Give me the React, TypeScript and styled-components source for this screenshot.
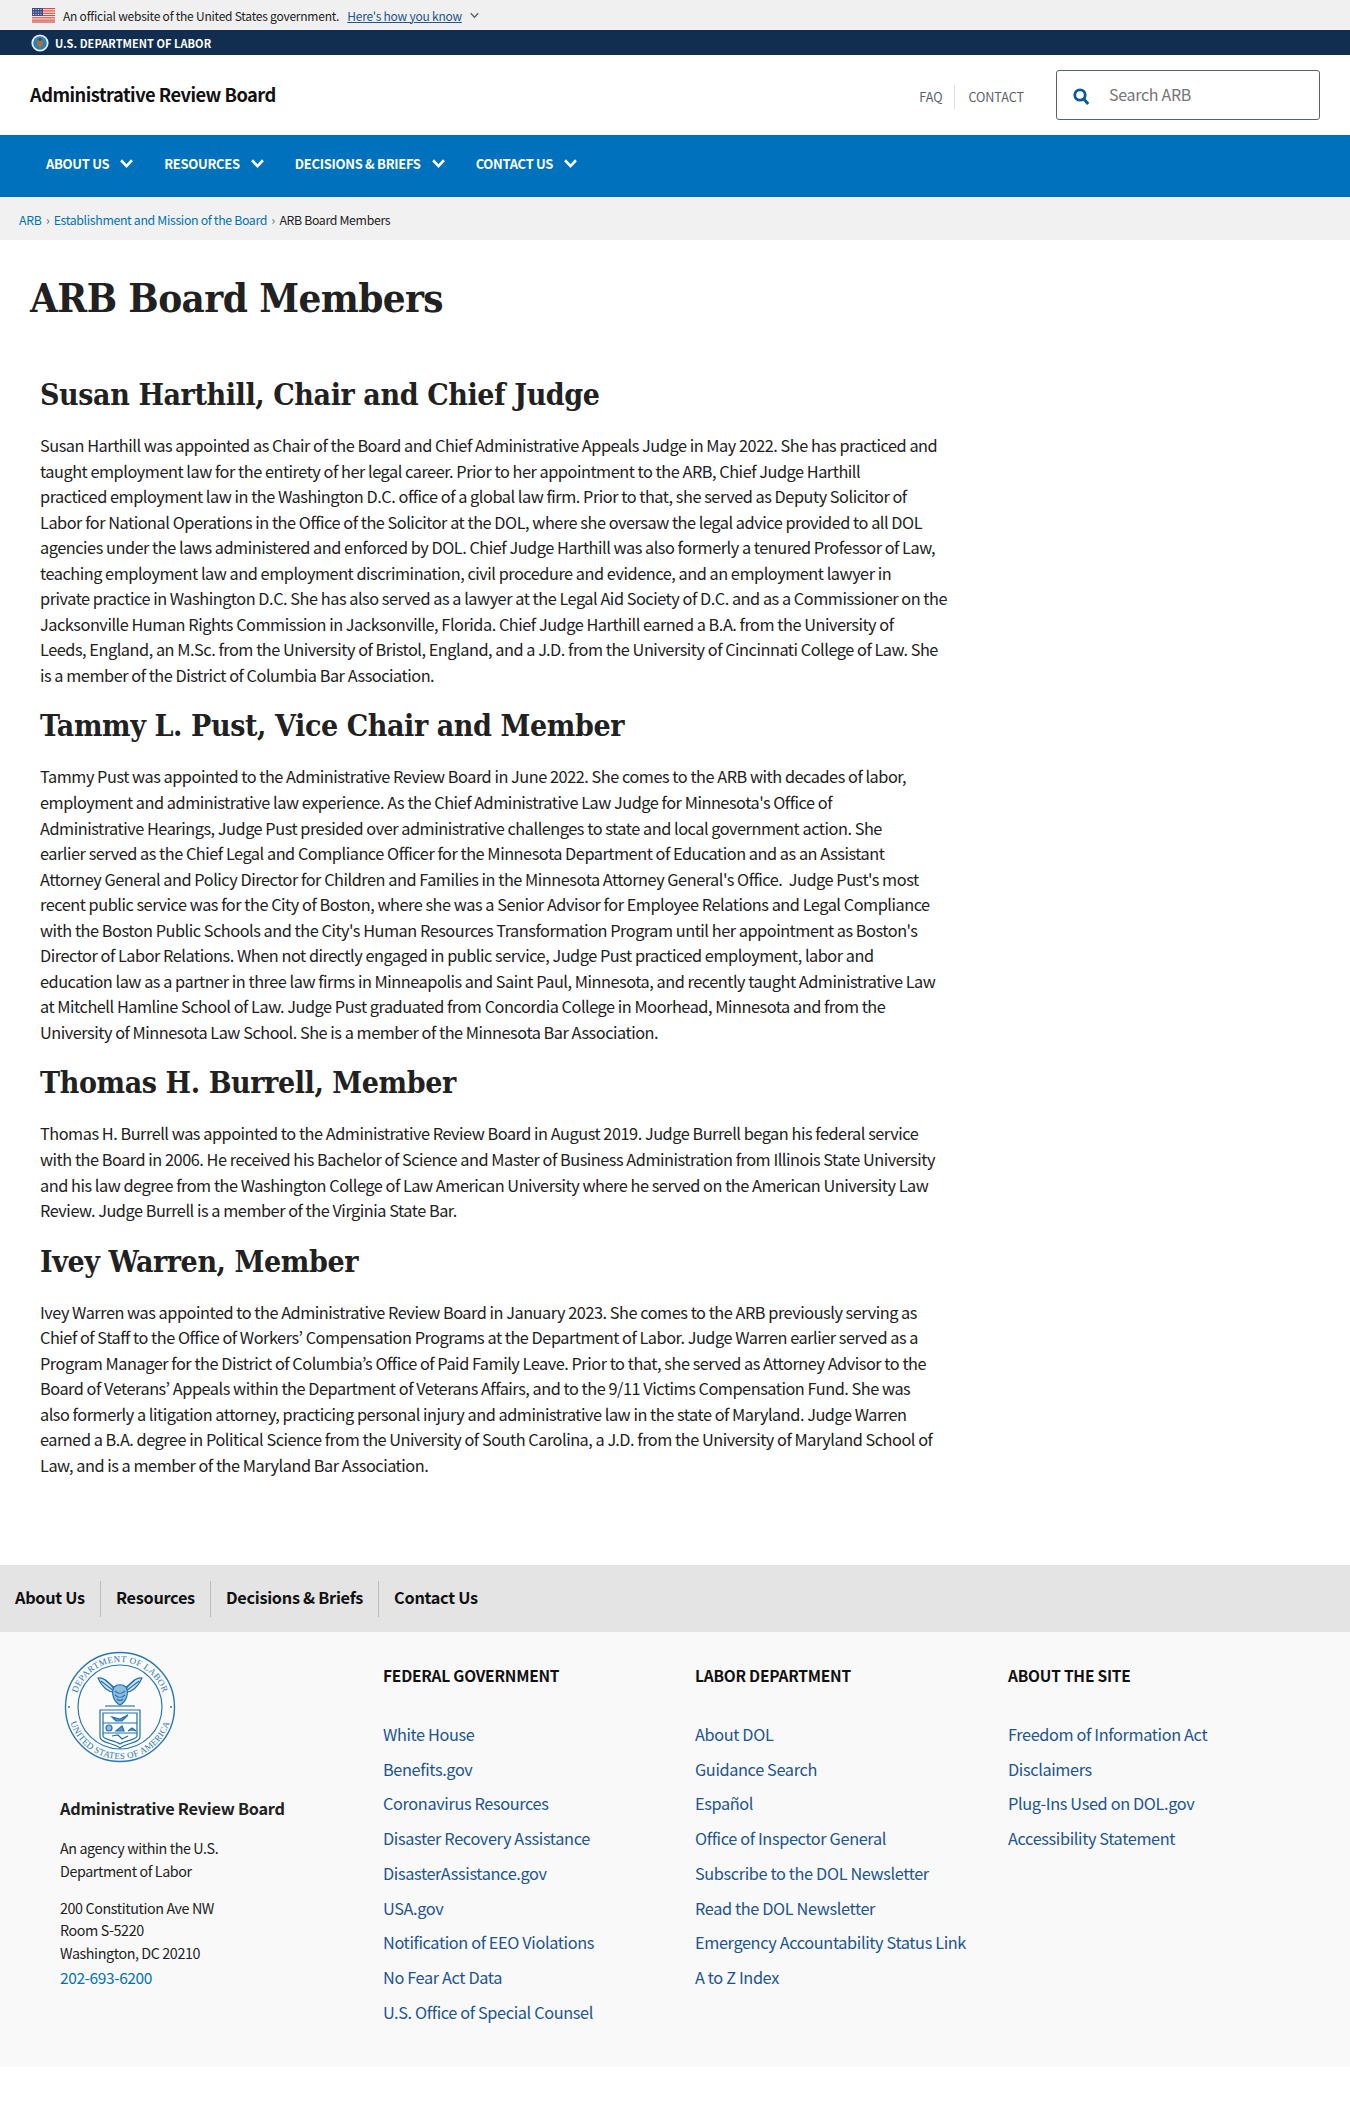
import React from "react";
import styled, { createGlobalStyle } from "styled-components";

const SANS = `"Noto Sans CJK KR", "Noto Sans", sans-serif`;
const SERIF = `"DejaVu Serif Condensed", "DejaVu Serif", "Liberation Serif", serif`;

const Global = createGlobalStyle`
  html, body { margin: 0; padding: 0; background: #fff; }
  body { font-family: ${SANS}; color: #212121; }
  * { box-sizing: border-box; }
  a { text-decoration: none; }
`;

const Page = styled.div`width: 1350px; min-height: 2126px; display: flex; flex-direction: column;`;

const GovBanner = styled.div`
  height: 30px; background: #f0f0f0; display: flex; align-items: center; padding-left: 32px; gap: 8px;
  font-size: 12px; letter-spacing: -0.23px; color: #212121;
`;
const GovLink = styled.a`color: #205493; text-decoration: underline;`;
const DolBar = styled.div`
  height: 25px; background: #112e51; display: flex; align-items: center; padding-left: 31px; gap: 6px;
  color: #fff; font-size: 11px; font-weight: 700; letter-spacing: 0.05px;
`;
const Header = styled.header`
  height: 80px; background: #fff; display: flex; align-items: center; padding: 0 30px;
`;
const SiteTitle = styled.div`font-size: 18.3px; font-weight: 700; letter-spacing: -0.52px; color: #111; flex: 1; padding-bottom: 2px;`;
const TopLinks = styled.div`display: flex; align-items: center; margin-right: 32px; margin-top: 4px;`;
const TopLink = styled.a<{ $divider?: boolean }>`
  font-size: 12.6px; letter-spacing: -0.05px; color: #5b616b; height: 24px; line-height: 24px;
  ${(p) => (p.$divider ? "border-right: 1px solid #dcdee0; padding-right: 12px; margin-right: 13px;" : "")}
`;
const SearchBox = styled.div`
  width: 264px; height: 50px; border: 1px solid #5b616b; border-radius: 3px; display: flex; align-items: center;
  padding: 0 0 2px 16px; gap: 19px; font-size: 16px; letter-spacing: -0.3px; color: #757575;
`;
const Nav = styled.nav`
  height: 62px; background: #0071bc; display: flex; align-items: center; padding-left: 46px; gap: 31px;
`;
const NavItem = styled.a`
  display: flex; align-items: center; gap: 11px; color: #fff; font-size: 13px; font-weight: 700;
  text-transform: uppercase; letter-spacing: -0.3px; padding-bottom: 5px;
`;
const Crumbs = styled.div`
  height: 43px; background: #f1f1f1; display: flex; align-items: center; padding: 2px 0 0 19px; font-size: 12.3px; letter-spacing: -0.33px; color: #212121;
`;
const CrumbLink = styled.a`color: #0071bc;`;
const CrumbSep = styled.span`color: #5b616b; margin: 0 4.5px; font-size: 12px;`;
const Main = styled.main`padding: 29px 30px 0; height: 1325px;`;
const Title = styled.h1`
  font-family: ${SERIF}; font-weight: 700; font-size: 40px; line-height: 58px; margin: 0 0 46px; color: #212121; letter-spacing: -0.6px;
`;
const Bio = styled.section`padding-left: 10px; margin-bottom: 16px;`;
const BioName = styled.h2`
  font-family: ${SERIF}; font-weight: 700; font-size: 30px; line-height: 44px; margin: 0 0 16px; color: #212121; letter-spacing: -0.4px;
`;
const BioText = styled.p`
  margin: 0; font-size: 16.3px; letter-spacing: -0.46px; line-height: 25.55px; white-space: pre-line; color: #212121;
`;
const FooterNav = styled.div`
  height: 67px; background: #e4e4e4; display: flex; align-items: center; padding-left: 15px;
`;
const FooterNavLink = styled.a<{ $last?: boolean }>`
  font-size: 16.3px; letter-spacing: -0.28px; font-weight: 700; color: #111; height: 36px; line-height: 32px;
  ${(p) => (p.$last ? "" : "border-right: 1px solid #bdbdbd; padding-right: 15px; margin-right: 15px;")}
`;
const Footer = styled.footer`
  height: 435px; background: #f9f9f9; display: grid; grid-template-columns: 323px 312px 313px 1fr; padding-left: 60px;
`;
const AgencyCol = styled.div`padding-top: 19px; font-size: 14.3px; letter-spacing: -0.4px; line-height: 22.8px; color: #212121;`;
const SealWrap = styled.div`width: 116px; height: 110px; margin-left: 2px; margin-bottom: 34px;`;
const AgencyName = styled.div`font-size: 16.3px; font-weight: 700; line-height: 26px; margin-bottom: 16px; letter-spacing: -0.25px;`;
const AgencyPara = styled.div`margin-bottom: 14px; white-space: pre-line;`;
const AddressBlock = styled.div`white-space: pre-line;`;
const Phone = styled.a`color: #0071bc; font-size: 15.5px; display: block; line-height: 24px;`;
const LinkCol = styled.div`padding-top: 30px; display: flex; flex-direction: column;`;
const ColHead = styled.div`
  font-size: 15.5px; letter-spacing: -0.22px; font-weight: 700; text-transform: uppercase; color: #111; line-height: 26px; margin-bottom: 29px;
`;
const ColLink = styled.a`font-size: 16.3px; letter-spacing: -0.36px; color: #205493; line-height: 34.7px; white-space: nowrap;`;

const Flag = () => (
  <svg width="23" height="15" viewBox="0 0 23 15">
    <rect width="23" height="15" fill="#fff" />
    {[0, 2.3, 4.6, 6.9, 9.2, 11.5, 13.4].map((y) => (
      <rect key={y} x="0" y={y} width="23" height="1.25" fill="#d5493f" />
    ))}
    <rect width="11" height="8" fill="#3c4a8a" />
    {[1.5, 4, 6.5].map((y) => [1.5, 4, 6.5, 9].map((x) => <circle key={x + "-" + y} cx={x} cy={y} r="0.6" fill="#fff" />))}
  </svg>
);
const Chevron = ({ color = "#fff", size = 13, w = 2.4 }: { color?: string; size?: number; w?: number }) => (
  <svg width={size} height={size} viewBox="0 0 12 12" fill="none">
    <path d="M1 3 L6 8.4 L11 3" stroke={color} strokeWidth={w} />
  </svg>
);
const SearchIcon = () => (
  <svg width="17" height="18" viewBox="0 0 17 18" fill="none" style={{ marginTop: 6 }}>
    <circle cx="7" cy="7" r="5.2" stroke="#0a5a94" strokeWidth="2.8" />
    <path d="M10.8 11 L15.2 16" stroke="#0a5a94" strokeWidth="3" />
  </svg>
);
const MiniSeal = () => (
  <svg width="18" height="18" viewBox="0 0 18 18">
    <circle cx="9" cy="9" r="8.6" fill="#e6eef4" />
    <circle cx="9" cy="9" r="6.8" fill="#2f7fb5" />
    <path d="M6.5 6 H11.5 V11 L9 14 L6.5 11 Z" fill="#a9713a" />
    <circle cx="9" cy="5.5" r="1.6" fill="#3f4f3f" />
  </svg>
);
const Seal = () => (
  <svg width="116" height="112" viewBox="0 0 116 112" fill="none">
    <defs>
      <path id="sealTop" d="M 13 56 A 45 45 0 0 1 103 56" />
      <path id="sealBottom" d="M 6 56 A 52 52 0 0 0 110 56" />
    </defs>
    <circle cx="58" cy="56" r="54.5" stroke="#2a77b3" strokeWidth="1.4" fill="#fff" fillOpacity="0.4" />
    <circle cx="58" cy="56" r="42" stroke="#2a77b3" strokeWidth="1.2" />
    <text fontFamily="Liberation Serif, serif" fontSize="9" fill="#2a77b3" letterSpacing="0.4">
      <textPath href="#sealTop" startOffset="50%" textAnchor="middle">DEPARTMENT OF LABOR</textPath>
    </text>
    <text fontFamily="Liberation Serif, serif" fontSize="9" fill="#2a77b3" letterSpacing="0.3">
      <textPath href="#sealBottom" startOffset="50%" textAnchor="middle">UNITED STATES OF AMERICA</textPath>
    </text>
    <circle cx="7" cy="56" r="1" fill="#2a77b3" />
    <circle cx="109" cy="56" r="1" fill="#2a77b3" />
    <g stroke="#1f6fae" strokeWidth="1.1">
      <path d="M36 27 C42 26 50 33 53 41 C47 42 40 36 36 27 Z" fill="#cfe3f2" />
      <path d="M80 27 C74 26 66 33 63 41 C69 42 76 36 80 27 Z" fill="#cfe3f2" />
      <path d="M39 30 L52 40 M43 29 L54 38 M77 30 L64 40 M73 29 L62 38" />
      <path d="M52 36 C55 33 61 33 64 36 C67 42 65 50 58 54 C51 50 49 42 52 36 Z" fill="#8fbde0" />
      <path d="M53 40 C56 43 60 43 63 40 M53 44 C56 47 60 47 63 44 M55 48 C57 50 59 50 61 48" />
      <path d="M43 55 H73" />
    </g>
    <g stroke="#1f6fae" strokeWidth="1.2" fill="none">
      <path d="M38 59 H78 V86 C78 92 64 92 58 97 C52 92 38 92 38 86 Z" fill="#fff" />
      <path d="M41 62 H75 V85 C75 89 63 89 58 93 C53 89 41 89 41 85 Z" />
      <path d="M41 72 H75 M41 82 H75" />
      <path d="M50 66 L58 68 L66 64 L60 70 L54 70 Z" fill="#5d9bcb" />
      <circle cx="47" cy="77" r="3" fill="#8fbde0" />
      <path d="M54 80 L60 75 L62 80 Z M66 80 L70 77 L74 80" fill="#5d9bcb" />
      <path d="M50 85 L56 84 L60 88 L66 85" />
    </g>
  </svg>
);

const bios = [
  {
    name: "Susan Harthill, Chair and Chief Judge",
    text: `Susan Harthill was appointed as Chair of the Board and Chief Administrative Appeals Judge in May 2022. She has practiced and
taught employment law for the entirety of her legal career. Prior to her appointment to the ARB, Chief Judge Harthill
practiced employment law in the Washington D.C. office of a global law firm. Prior to that, she served as Deputy Solicitor of
Labor for National Operations in the Office of the Solicitor at the DOL, where she oversaw the legal advice provided to all DOL
agencies under the laws administered and enforced by DOL. Chief Judge Harthill was also formerly a tenured Professor of Law,
teaching employment law and employment discrimination, civil procedure and evidence, and an employment lawyer in
private practice in Washington D.C. She has also served as a lawyer at the Legal Aid Society of D.C. and as a Commissioner on the
Jacksonville Human Rights Commission in Jacksonville, Florida. Chief Judge Harthill earned a B.A. from the University of
Leeds, England, an M.Sc. from the University of Bristol, England, and a J.D. from the University of Cincinnati College of Law. She
is a member of the District of Columbia Bar Association.`,
  },
  {
    name: "Tammy L. Pust, Vice Chair and Member",
    text: `Tammy Pust was appointed to the Administrative Review Board in June 2022. She comes to the ARB with decades of labor,
employment and administrative law experience. As the Chief Administrative Law Judge for Minnesota's Office of
Administrative Hearings, Judge Pust presided over administrative challenges to state and local government action. She
earlier served as the Chief Legal and Compliance Officer for the Minnesota Department of Education and as an Assistant
Attorney General and Policy Director for Children and Families in the Minnesota Attorney General's Office.\u00a0 Judge Pust's most
recent public service was for the City of Boston, where she was a Senior Advisor for Employee Relations and Legal Compliance
with the Boston Public Schools and the City's Human Resources Transformation Program until her appointment as Boston's
Director of Labor Relations. When not directly engaged in public service, Judge Pust practiced employment, labor and
education law as a partner in three law firms in Minneapolis and Saint Paul, Minnesota, and recently taught Administrative Law
at Mitchell Hamline School of Law. Judge Pust graduated from Concordia College in Moorhead, Minnesota and from the
University of Minnesota Law School. She is a member of the Minnesota Bar Association.`,
  },
  {
    name: "Thomas H. Burrell, Member",
    text: `Thomas H. Burrell was appointed to the Administrative Review Board in August 2019. Judge Burrell began his federal service
with the Board in 2006. He received his Bachelor of Science and Master of Business Administration from Illinois State University
and his law degree from the Washington College of Law American University where he served on the American University Law
Review. Judge Burrell is a member of the Virginia State Bar.`,
  },
  {
    name: "Ivey Warren, Member",
    text: `Ivey Warren was appointed to the Administrative Review Board in January 2023. She comes to the ARB previously serving as
Chief of Staff to the Office of Workers’ Compensation Programs at the Department of Labor. Judge Warren earlier served as a
Program Manager for the District of Columbia’s Office of Paid Family Leave. Prior to that, she served as Attorney Advisor to the
Board of Veterans’ Appeals within the Department of Veterans Affairs, and to the 9/11 Victims Compensation Fund. She was
also formerly a litigation attorney, practicing personal injury and administrative law in the state of Maryland. Judge Warren
earned a B.A. degree in Political Science from the University of South Carolina, a J.D. from the University of Maryland School of
Law, and is a member of the Maryland Bar Association.`,
  },
];

const cols = [
  {
    head: "Federal Government",
    links: ["White House", "Benefits.gov", "Coronavirus Resources", "Disaster Recovery Assistance", "DisasterAssistance.gov", "USA.gov", "Notification of EEO Violations", "No Fear Act Data", "U.S. Office of Special Counsel"],
  },
  {
    head: "Labor Department",
    links: ["About DOL", "Guidance Search", "Español", "Office of Inspector General", "Subscribe to the DOL Newsletter", "Read the DOL Newsletter", "Emergency Accountability Status Link", "A to Z Index"],
  },
  {
    head: "About the Site",
    links: ["Freedom of Information Act", "Disclaimers", "Plug-Ins Used on DOL.gov", "Accessibility Statement"],
  },
];

const navItems = ["About Us", "Resources", "Decisions & Briefs", "Contact Us"];

export default function App() {
  return (
    <Page>
      <Global />
      <GovBanner>
        <Flag />
        <span>An official website of the United States government.</span>
        <GovLink href="#">Here's how you know</GovLink>
        <Chevron color="#5b616b" size={9} w={1.8} />
      </GovBanner>
      <DolBar><MiniSeal />U.S. DEPARTMENT OF LABOR</DolBar>
      <Header>
        <SiteTitle>Administrative Review Board</SiteTitle>
        <TopLinks>
          <TopLink href="#" $divider>FAQ</TopLink>
          <TopLink href="#">CONTACT</TopLink>
        </TopLinks>
        <SearchBox><SearchIcon />Search ARB</SearchBox>
      </Header>
      <Nav>
        {navItems.map((n) => (
          <NavItem href="#" key={n}>{n}<Chevron /></NavItem>
        ))}
      </Nav>
      <Crumbs>
        <CrumbLink href="#">ARB</CrumbLink><CrumbSep>›</CrumbSep>
        <CrumbLink href="#">Establishment and Mission of the Board</CrumbLink><CrumbSep>›</CrumbSep>
        <span>ARB Board Members</span>
      </Crumbs>
      <Main>
        <Title>ARB Board Members</Title>
        {bios.map((b) => (
          <Bio key={b.name}>
            <BioName>{b.name}</BioName>
            <BioText>{b.text}</BioText>
          </Bio>
        ))}
      </Main>
      <FooterNav>
        {navItems.map((n, i) => (
          <FooterNavLink href="#" key={n} $last={i === navItems.length - 1}>{n}</FooterNavLink>
        ))}
      </FooterNav>
      <Footer>
        <AgencyCol>
          <SealWrap><Seal /></SealWrap>
          <AgencyName>Administrative Review Board</AgencyName>
          <AgencyPara>{"An agency within the U.S.\nDepartment of Labor"}</AgencyPara>
          <AddressBlock>{"200 Constitution Ave NW\nRoom S-5220\nWashington, DC 20210"}</AddressBlock>
          <Phone href="#">202-693-6200</Phone>
        </AgencyCol>
        {cols.map((c) => (
          <LinkCol key={c.head}>
            <ColHead>{c.head}</ColHead>
            {c.links.map((l) => <ColLink href="#" key={l}>{l}</ColLink>)}
          </LinkCol>
        ))}
      </Footer>
    </Page>
  );
}
